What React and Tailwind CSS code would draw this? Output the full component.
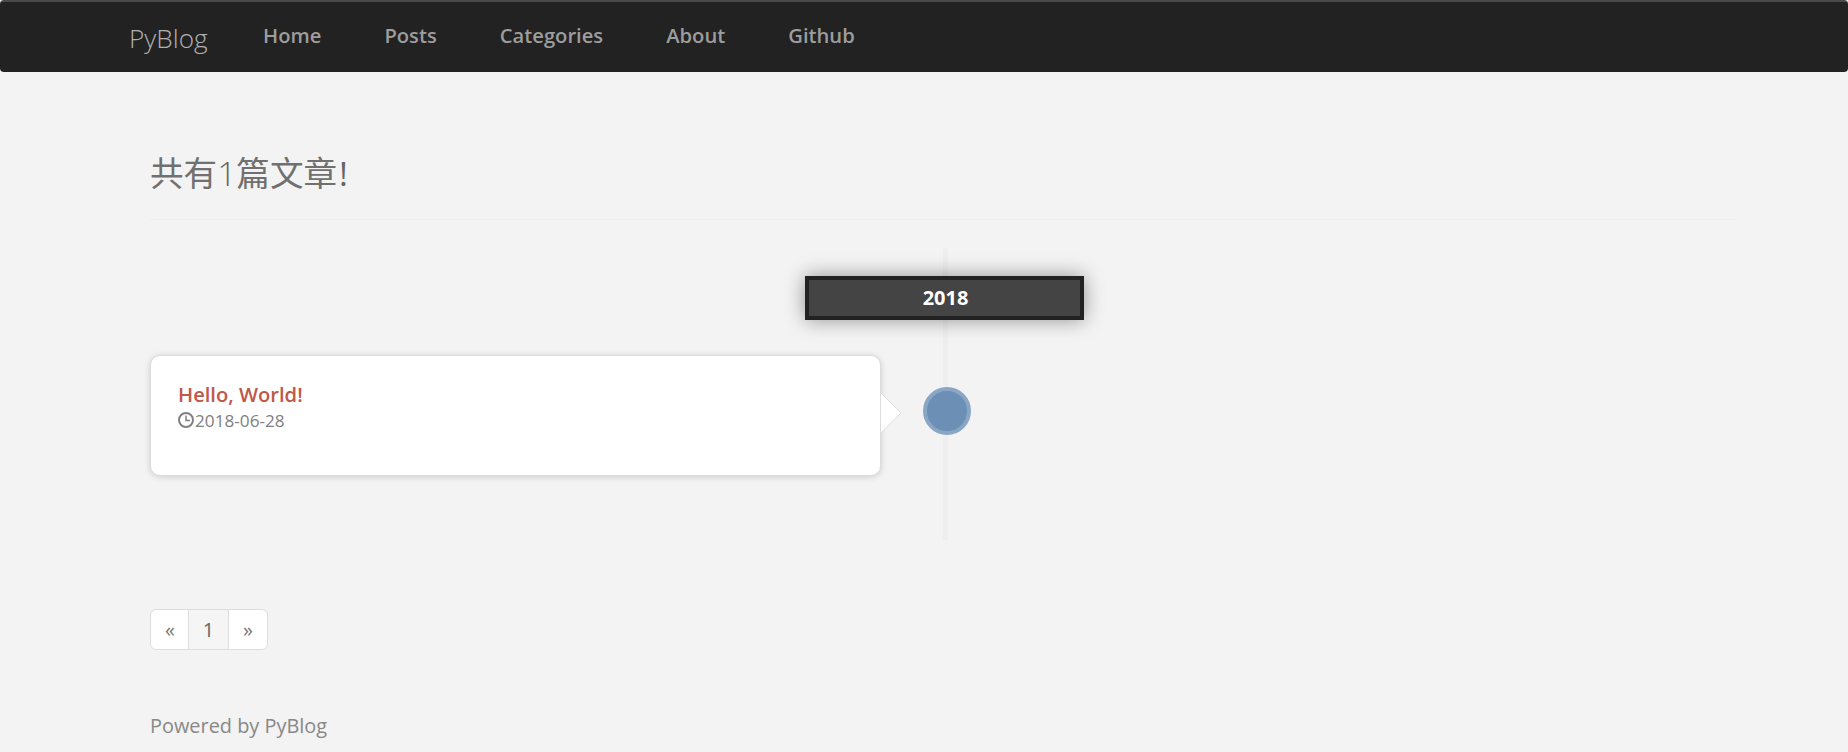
import React from "react";

const sans = "font-['Open_Sans','Noto_Sans_CJK_SC',sans-serif]";

function Clock() {
  return (
    <svg width="16" height="16" viewBox="0 0 16 16" fill="none" stroke="#808080" strokeWidth="2" className="shrink-0 -mt-[3px] mr-[1px]">
      <circle cx="8" cy="8" r="7" />
      <path d="M8 3.5V8.5H12" strokeWidth="1.5" />
    </svg>
  );
}

export default function App() {
  return (
    <div className={`${sans} min-h-[752px] bg-[#f3f3f3] overflow-hidden`}>
      <nav className="h-[72px] bg-[#222222] rounded-[4px] border-t-2 border-t-[#4a4a4a] flex items-center pl-[129px]">
        <a className="text-[26.2px] font-light text-[#b0b0b0] w-[134px] mt-[1px] leading-[32px]">PyBlog</a>
        <div className="flex gap-[63px] text-[20.2px] font-semibold text-[#9d9d9d] -mt-[3px]">
          <a>Home</a>
          <a>Posts</a>
          <a>Categories</a>
          <a>About</a>
          <a>Github</a>
        </div>
      </nav>

      <main className="pl-[150px] pr-[113px]">
        <div className="mt-[77px] pb-[22px] border-b border-b-[#eeeeee]">
          <h1 className="text-[33.6px] font-light leading-[48px] text-[#666666]">
            <span className="font-normal text-[#707070]">共有</span>1<span className="font-normal text-[#707070]">篇文章</span><span className="ml-[2px] font-normal">!</span>
          </h1>
        </div>

        <section className="relative mt-[28px] h-[292px]">
          <div className="absolute left-[793px] top-0 bottom-0 w-[5px] bg-[#eeeeee]" />
          <div className="relative ml-[655px] w-[279px] h-[44px] mt-[28px] top-[28px] border-[4px] border-[#222222] bg-[#444444] text-white font-bold text-[20px] flex items-center justify-center pl-[2px] shadow-[0_0_20px_rgba(0,0,0,0.4)]">
            2018
          </div>
          <div className="relative mt-[35px] top-[28px] flex items-start">
            <div className="relative w-[731px] h-[121px] bg-white rounded-[10px] border border-[#dcdcdc] shadow-[0_1px_6px_rgba(0,0,0,0.16)] pl-[27px] pt-[24px]">
              <div className="text-[20.15px] font-semibold text-[#c0574a] leading-[29px]">Hello, World!</div>
              <div className="flex items-center text-[17.2px] text-[#808080] leading-[24px]">
                <Clock />
                <span>2018-06-28</span>
              </div>
              <svg width="22" height="42" viewBox="0 0 22 42" className="absolute left-[730px] top-[36px]">
                <path d="M0 1L20 21L0 41" fill="#ffffff" stroke="#dddddd" />
              </svg>
            </div>
            <div className="absolute left-[773px] top-[32px] w-[48px] h-[48px] rounded-full bg-[#6b8fb5] border-[4px] border-[#8aa6c5]" />
          </div>
        </section>

        <div className="mt-[69px] flex h-[41px] w-[118px] text-[20px] text-[#777777] bg-white border border-[#dddddd] rounded-[6px] overflow-hidden">
          <span className="w-[37px] flex items-center justify-center pl-[1px]">«</span>
          <span className="w-[41px] flex items-center justify-center bg-[#f5f5f5] border-x border-x-[#dddddd] text-[#666666] text-[20px]">1</span>
          <span className="flex-1 flex items-center justify-center">»</span>
        </div>

        <footer className="mt-[62px] text-[19.9px] leading-[28px] text-[#888888]">Powered by PyBlog</footer>
      </main>
    </div>
  );
}
